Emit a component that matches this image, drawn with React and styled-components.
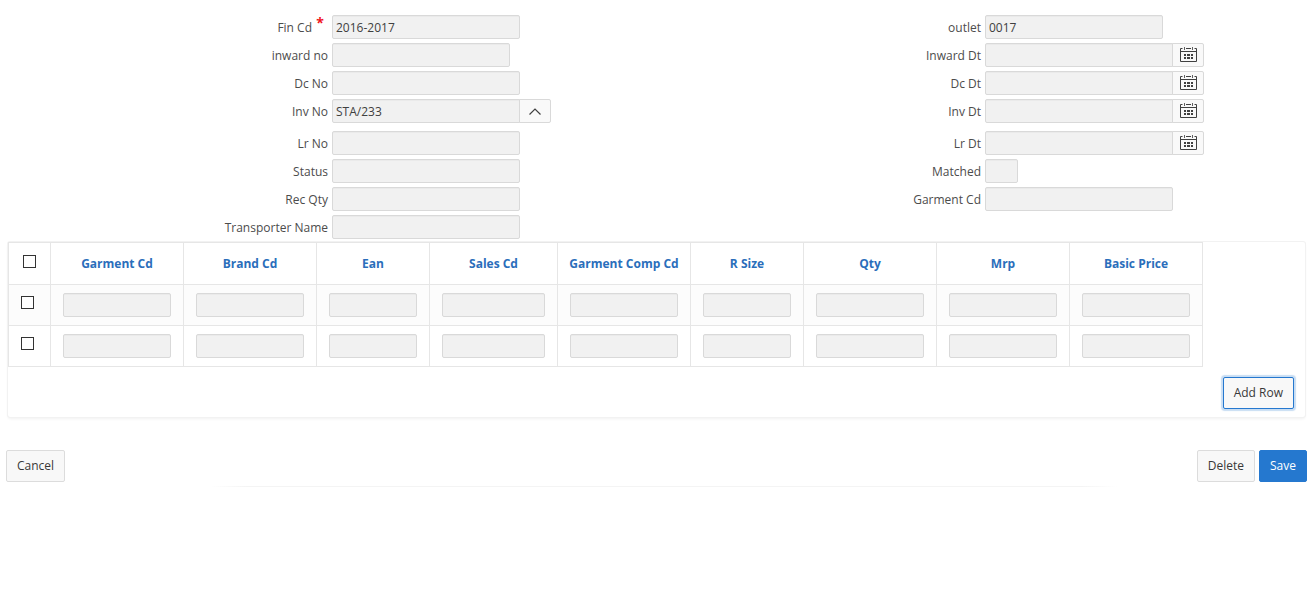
import React, { useState } from "react";
import styled, { createGlobalStyle, css } from "styled-components";

const GlobalStyle = createGlobalStyle`
  * {
    box-sizing: border-box;
  }

  body {
    margin: 0;
    background: #fff;
    color: #404040;
    font-family: "Open Sans", "Noto Sans", sans-serif;
    font-size: 12px;
    line-height: 16px;
  }
`;

const Page = styled.main`
  padding: 15px 0 0;
`;

const Form = styled.form`
  display: flex;
  flex-direction: column;
`;

const Fields = styled.div`
  display: flex;
  flex-direction: column;
  gap: 8px;
  padding: 0 4px;
`;

const FieldGroup = styled.div`
  display: grid;
  grid-template-columns: 1fr 1fr;
  row-gap: 4px;
`;

const FieldRow = styled.div`
  display: grid;
  grid-template-columns: 1fr 1fr;
  column-gap: 3px;
  align-items: center;
`;

const Label = styled.label`
  height: 24px;
  padding: 1px 1px 0 0;
  color: #4c4c4c;
  font-size: 12px;
  line-height: 24px;
  text-align: right;
  white-space: nowrap;
`;

const Required = styled.span`
  display: inline-block;
  width: 16px;
  color: #f0141e;
  font-size: 14px;
  font-weight: 700;
  line-height: 12px;
  text-align: center;
  vertical-align: 4px;
`;

const Control = styled.div`
  display: flex;
`;

const TextInput = styled.input`
  display: block;
  width: ${({ $width }) => $width}px;
  height: 24px;
  padding: 1px 3px 0;
  border: 1px solid #d9d9d9;
  border-radius: 2px;
  background: #f1f1f1;
  box-shadow: inset 0 1px 1px rgba(0, 0, 0, 0.03);
  color: #404040;
  font-family: inherit;
  font-size: 12px;
  outline: none;

  ${({ $joined }) =>
    $joined &&
    css`
      border-radius: 2px 0 0 2px;
    `}
`;

const AddonButton = styled.button`
  display: flex;
  align-items: center;
  justify-content: center;
  width: 32px;
  height: 24px;
  margin-left: -1px;
  padding: 0;
  border: 1px solid #d9d9d9;
  border-radius: 0 2px 2px 0;
  background: #f9f9f9;
  color: #404040;
`;

const Panel = styled.section`
  margin: 3px 9px 0 8px;
  border-radius: 2px;
  box-shadow: 0 0 0 1px #f2f2f2, 0 2px 3px rgba(0, 0, 0, 0.06);
`;

const Table = styled.table`
  border-collapse: collapse;
`;

const HeadCell = styled.th`
  height: 42px;
  padding: 0;
  border: 1px solid #e6e6e6;
  color: #2a6ebb;
  font-size: 12px;
  font-weight: 700;
  text-align: center;
  white-space: nowrap;
`;

const BodyRow = styled.tr`
  &:nth-child(odd) {
    background: #fcfcfc;
  }
`;

const Cell = styled.td`
  padding: 8px 12px;
  border: 1px solid #e6e6e6;
`;

const CheckHeadCell = styled(HeadCell)`
  width: 42px;
  padding: 12px 0;
  vertical-align: top;
`;

const CheckCell = styled(Cell)`
  padding: 11px 12px;
  vertical-align: top;
`;

const Checkbox = styled.input`
  appearance: none;
  display: block;
  width: 13px;
  height: 13px;
  margin: 0;
  border: 1px solid #333;
  background: #fff;

  &:checked {
    background: #333;
    box-shadow: inset 0 0 0 2px #fff;
  }

  ${CheckHeadCell} & {
    margin: 0 auto;
  }
`;

const PanelFooter = styled.div`
  display: flex;
  justify-content: flex-end;
  padding: 10px 11px 8px;
`;

const Button = styled.button`
  height: 32px;
  padding: 0 10px;
  border: 1px solid #dcdcdc;
  border-radius: 2px;
  background: #f8f8f8;
  color: #383838;
  font-family: inherit;
  font-size: 12px;
  line-height: 16px;

  ${({ $variant }) =>
    $variant === "hot" &&
    css`
      border-color: #2578cf;
      background: #2578cf;
      color: #fff;
    `}

  ${({ $variant }) =>
    $variant === "active" &&
    css`
      border-color: #2578cf;
      box-shadow: 0 0 1px 2px rgba(37, 120, 207, 0.25);
    `}
`;

const ButtonBar = styled.div`
  display: flex;
  justify-content: space-between;
  margin-top: 33px;
  padding: 0 7px 0 6px;
`;

const ButtonSet = styled.div`
  display: flex;
  gap: 4px;
`;

const Divider = styled.hr`
  height: 1px;
  margin: 4px 15% 0 16%;
  border: 0;
  background: linear-gradient(to right, transparent, #f4f4f4 4%, #f4f4f4 96%, transparent);
`;

const fieldGroups = [
  [
    { id: "fin-cd", label: "Fin Cd", width: 188, value: "2016-2017", required: true },
    { id: "outlet", label: "outlet", width: 178, value: "0017" },
    { id: "inward-no", label: "inward no", width: 178 },
    { id: "inward-dt", label: "Inward Dt", width: 188, addon: "date" },
    { id: "dc-no", label: "Dc No", width: 188 },
    { id: "dc-dt", label: "Dc Dt", width: 188, addon: "date" },
    { id: "inv-no", label: "Inv No", width: 188, value: "STA/233", addon: "list" },
    { id: "inv-dt", label: "Inv Dt", width: 188, addon: "date" },
  ],
  [
    { id: "lr-no", label: "Lr No", width: 188 },
    { id: "lr-dt", label: "Lr Dt", width: 188, addon: "date" },
    { id: "status", label: "Status", width: 188 },
    { id: "matched", label: "Matched", width: 33 },
    { id: "rec-qty", label: "Rec Qty", width: 188 },
    { id: "garment-cd", label: "Garment Cd", width: 188 },
    { id: "transporter", label: "Transporter Name", width: 188 },
  ],
];

const columns = [
  { name: "Garment Cd", width: 108 },
  { name: "Brand Cd", width: 108 },
  { name: "Ean", width: 88 },
  { name: "Sales Cd", width: 103 },
  { name: "Garment Comp Cd", width: 108 },
  { name: "R Size", width: 88 },
  { name: "Qty", width: 108 },
  { name: "Mrp", width: 108 },
  { name: "Basic Price", width: 108 },
];

function CalendarIcon() {
  return (
    <svg width="17" height="16" viewBox="0 0 17 16" fill="none" aria-hidden="true">
      <path d="M2.5 1.5h-2v13h16v-13h-2M6 1.5h5M.5 4.5h16" stroke="#404040" />
      <path d="M4.5 0v3M12.5 0v3" stroke="#606060" />
      <path d="M4 7h2v2H4zM7 7h3v2H7zM11 7h2v2h-2zM4 10h2v2H4zM7 10h3v2H7zM11 10h2v2h-2z" fill="#404040" />
    </svg>
  );
}

function ChevronIcon() {
  return (
    <svg width="12" height="7" viewBox="0 0 12 7" fill="none" aria-hidden="true">
      <path d="M.5 6.5 6 1l5.5 5.5" stroke="#404040" strokeWidth="1.2" />
    </svg>
  );
}

function Field({ id, label, width, value = "", required, addon }) {
  return (
    <FieldRow>
      <Label htmlFor={id}>
        {label}
        {required && <Required>*</Required>}
      </Label>
      <Control>
        <TextInput id={id} type="text" defaultValue={value} $width={width} $joined={Boolean(addon)} />
        {addon === "date" && (
          <AddonButton type="button" aria-label={`Pick ${label}`}>
            <CalendarIcon />
          </AddonButton>
        )}
        {addon === "list" && (
          <AddonButton type="button" aria-label={`List of ${label}`}>
            <ChevronIcon />
          </AddonButton>
        )}
      </Control>
    </FieldRow>
  );
}

export default function App() {
  const [rows, setRows] = useState([false, false]);
  const allChecked = rows.every(Boolean);

  const toggleAll = () => setRows(rows.map(() => !allChecked));
  const toggleRow = (index) =>
    setRows(rows.map((checked, i) => (i === index ? !checked : checked)));

  return (
    <>
      <GlobalStyle />
      <Page>
        <Form onSubmit={(e) => e.preventDefault()}>
          <Fields>
            {fieldGroups.map((group) => (
              <FieldGroup key={group[0].id}>
                {group.map((field) => (
                  <Field key={field.id} {...field} />
                ))}
              </FieldGroup>
            ))}
          </Fields>

          <Panel>
            <Table>
              <thead>
                <tr>
                  <CheckHeadCell>
                    <Checkbox
                      type="checkbox"
                      aria-label="Select all rows"
                      checked={allChecked}
                      onChange={toggleAll}
                    />
                  </CheckHeadCell>
                  {columns.map((col) => (
                    <HeadCell key={col.name} scope="col">
                      {col.name}
                    </HeadCell>
                  ))}
                </tr>
              </thead>
              <tbody>
                {rows.map((checked, index) => (
                  <BodyRow key={index}>
                    <CheckCell>
                      <Checkbox
                        type="checkbox"
                        aria-label={`Select row ${index + 1}`}
                        checked={checked}
                        onChange={() => toggleRow(index)}
                      />
                    </CheckCell>
                    {columns.map((col) => (
                      <Cell key={col.name}>
                        <TextInput type="text" aria-label={col.name} $width={col.width} />
                      </Cell>
                    ))}
                  </BodyRow>
                ))}
              </tbody>
            </Table>
            <PanelFooter>
              <Button type="button" $variant="active" onClick={() => setRows([...rows, false])}>
                Add Row
              </Button>
            </PanelFooter>
          </Panel>

          <ButtonBar>
            <Button type="button">Cancel</Button>
            <ButtonSet>
              <Button type="button">Delete</Button>
              <Button type="submit" $variant="hot">
                Save
              </Button>
            </ButtonSet>
          </ButtonBar>
        </Form>
        <Divider />
      </Page>
    </>
  );
}
